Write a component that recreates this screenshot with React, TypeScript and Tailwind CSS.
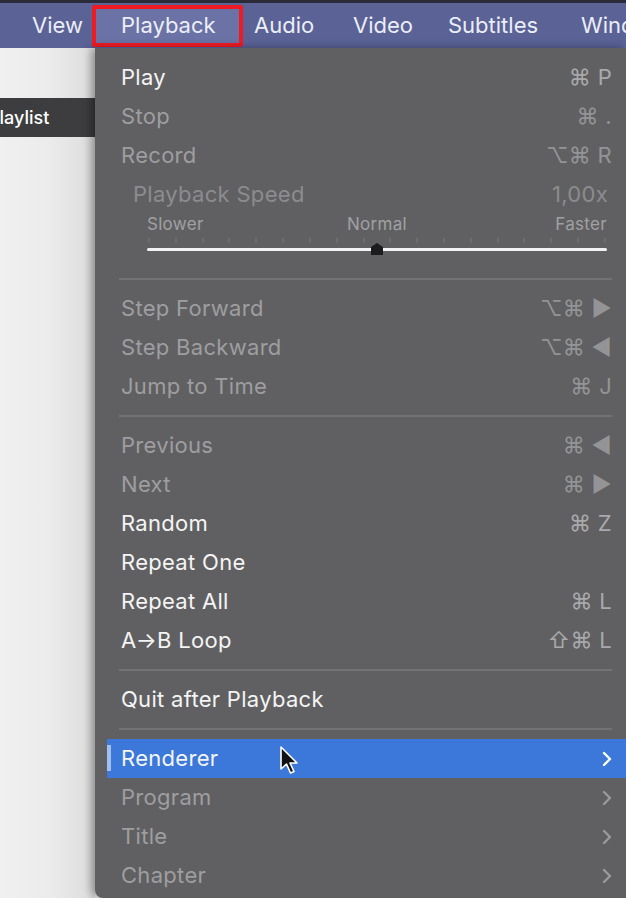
import React from 'react';

type Row =
  | { kind: 'item'; label: string; shortcut?: string; enabled?: boolean; submenu?: boolean; active?: boolean }
  | { kind: 'sep' }
  | { kind: 'speed' };

const rows: Row[] = [
  { kind: 'item', label: 'Play', shortcut: '⌘ P', enabled: true },
  { kind: 'item', label: 'Stop', shortcut: '⌘ .' },
  { kind: 'item', label: 'Record', shortcut: '⌥⌘ R' },
  { kind: 'speed' },
  { kind: 'sep' },
  { kind: 'item', label: 'Step Forward', shortcut: '⌥⌘ ▶' },
  { kind: 'item', label: 'Step Backward', shortcut: '⌥⌘ ◀' },
  { kind: 'item', label: 'Jump to Time', shortcut: '⌘ J' },
  { kind: 'sep' },
  { kind: 'item', label: 'Previous', shortcut: '⌘ ◀' },
  { kind: 'item', label: 'Next', shortcut: '⌘ ▶' },
  { kind: 'item', label: 'Random', shortcut: '⌘ Z', enabled: true },
  { kind: 'item', label: 'Repeat One', enabled: true },
  { kind: 'item', label: 'Repeat All', shortcut: '⌘ L', enabled: true },
  { kind: 'item', label: 'A→B Loop', shortcut: '⇧⌘ L', enabled: true },
  { kind: 'sep' },
  { kind: 'item', label: 'Quit after Playback', enabled: true },
  { kind: 'sep' },
  { kind: 'item', label: 'Renderer', enabled: true, submenu: true, active: true },
  { kind: 'item', label: 'Program', submenu: true },
  { kind: 'item', label: 'Title', submenu: true },
  { kind: 'item', label: 'Chapter', submenu: true },
];

const menuBar = [
  { label: 'View', w: 'w-[90px]', pl: 'pl-[32px]' },
  { label: 'Playback', w: 'w-[158px]', pl: '', boxed: true },
  { label: 'Audio', w: 'w-[101px]', pl: 'pl-[6px]' },
  { label: 'Video', w: 'w-[96px]', pl: 'pl-[4px]' },
  { label: 'Subtitles', w: 'w-[133px]', pl: 'pl-[3px]' },
  { label: 'Window', w: 'w-[90px]', pl: 'pl-[3px]' },
];

function Chevron({ light }: { light?: boolean }) {
  return (
    <svg width="10" height="16" viewBox="0 0 10 16" className={light ? 'text-white' : 'text-[#9a9a9c]'}>
      <path d="M2 2 L8 8 L2 14" fill="none" stroke="currentColor" strokeWidth="2.4" strokeLinecap="round" strokeLinejoin="round" />
    </svg>
  );
}

function Cursor() {
  return (
    <svg width="20" height="30" viewBox="0 0 20 30" className="absolute left-[172px] top-[6px]">
      <path d="M2 2 L2 24 L7.5 19 L11.5 28 L15 26.5 L11 18 L18 18 Z" fill="#111" stroke="#fff" strokeWidth="1.6" strokeLinejoin="round" />
    </svg>
  );
}

function SpeedBlock() {
  const ticks = [149, 176, 203, 230, 257, 284, 311, 338, 365, 392, 419, 446, 473, 500, 527, 554, 581, 606];
  return (
    <div>
      <div className="h-[39px] flex items-center justify-between pl-[38px] pr-[18px] text-[#8c8c8e]">
        <span>Playback Speed</span>
        <span>1,00x</span>
      </div>
      <div className="h-[55px] pl-[52px] pr-[19px]">
        <div className="grid grid-cols-3 text-[17px] leading-[20px] text-[#a0a0a2]">
          <span>Slower</span>
          <span className="text-center">Normal</span>
          <span className="text-right">Faster</span>
        </div>
        <div className="relative h-[35px]">
          <div className="absolute left-0 right-0 top-[4px] flex justify-between px-[1px]">
            {ticks.map((t) => (
              <div key={t} className="w-[2px] h-[5px] bg-[#6c6c6e]" />
            ))}
          </div>
          <div className="absolute left-0 right-0 top-[14px] h-[3px] rounded-full bg-[#f2f2f2]" />
          <svg width="16" height="14" viewBox="0 0 16 14" className="absolute left-[222px] top-[8px]">
            <path d="M8 1 L14 5 L14 13 L2 13 L2 5 Z" fill="#1c1c1e" />
          </svg>
        </div>
      </div>
    </div>
  );
}

export default function App() {
  return (
    <div className="w-[626px] h-[898px] overflow-hidden bg-[#ededed] font-['Inter','Liberation_Sans',sans-serif] flex flex-col">
      {/* menu bar */}
      <div className="h-[3px] bg-[#2a2b38]" />
      <div className="h-[45px] bg-[#5a6296] flex items-center text-[22px] text-[#eceef6] shrink-0 whitespace-nowrap">
        {menuBar.map((m) => (
          <div key={m.label} className={`${m.w} shrink-0 h-full flex items-center`}>
            {m.boxed ? (
              <div className="ml-[2px] w-[151px] h-[42px] border-[4px] border-[#ee1b24] rounded-[2px] flex items-center pl-[25px] bg-[#6a72a6]">
                {m.label}
              </div>
            ) : (
              <span className={m.pl}>{m.label}</span>
            )}
          </div>
        ))}
      </div>

      <div className="flex flex-1 min-h-0">
        {/* sidebar behind the menu */}
        <div className="w-[95px] shrink-0 overflow-hidden bg-gradient-to-r from-[#f0f0f0] via-[#ececec] to-[#dcdcdc]">
          <div className="h-[50px]" />
          <div className="h-[39px] bg-[#3d3d3f] flex items-center text-[18px] text-white font-medium">
            <span className="-ml-[12px]">Playlist</span>
          </div>
        </div>

        {/* playback menu */}
        <div className="flex-1 bg-[#606062] rounded-bl-[8px] shadow-[-4px_0_8px_rgba(0,0,0,0.35)] pt-[10px] text-[22px] tracking-[0.3px] overflow-hidden">
          {rows.map((r, i) => {
            if (r.kind === 'sep') {
              return (
                <div key={i} className="h-[20px] flex items-center pl-[24px] pr-[14px]">
                  <div className="h-[2px] w-full bg-[#737375]" />
                </div>
              );
            }
            if (r.kind === 'speed') return <SpeedBlock key={i} />;
            return (
              <div
                key={i}
                className={`relative h-[39px] flex items-center justify-between pr-[14px] ${
                  r.active ? 'bg-[#3b78da] ml-[12px] pl-[14px]' : 'pl-[26px]'
                } ${r.enabled ? 'text-[#f4f4f4]' : 'text-[#9e9ea0]'}`}
              >
                {r.active && <div className="absolute left-0 top-[6px] w-[4px] h-[26px] bg-[#9fc0f0]" />}
                <span>{r.label}</span>
                {r.submenu ? (
                  <Chevron light={r.active} />
                ) : (
                  <span className={r.enabled ? 'text-[#a9a9ab]' : 'text-[#949496]'}>{r.shortcut}</span>
                )}
                {r.active && <Cursor />}
              </div>
            );
          })}
        </div>
      </div>
    </div>
  );
}
